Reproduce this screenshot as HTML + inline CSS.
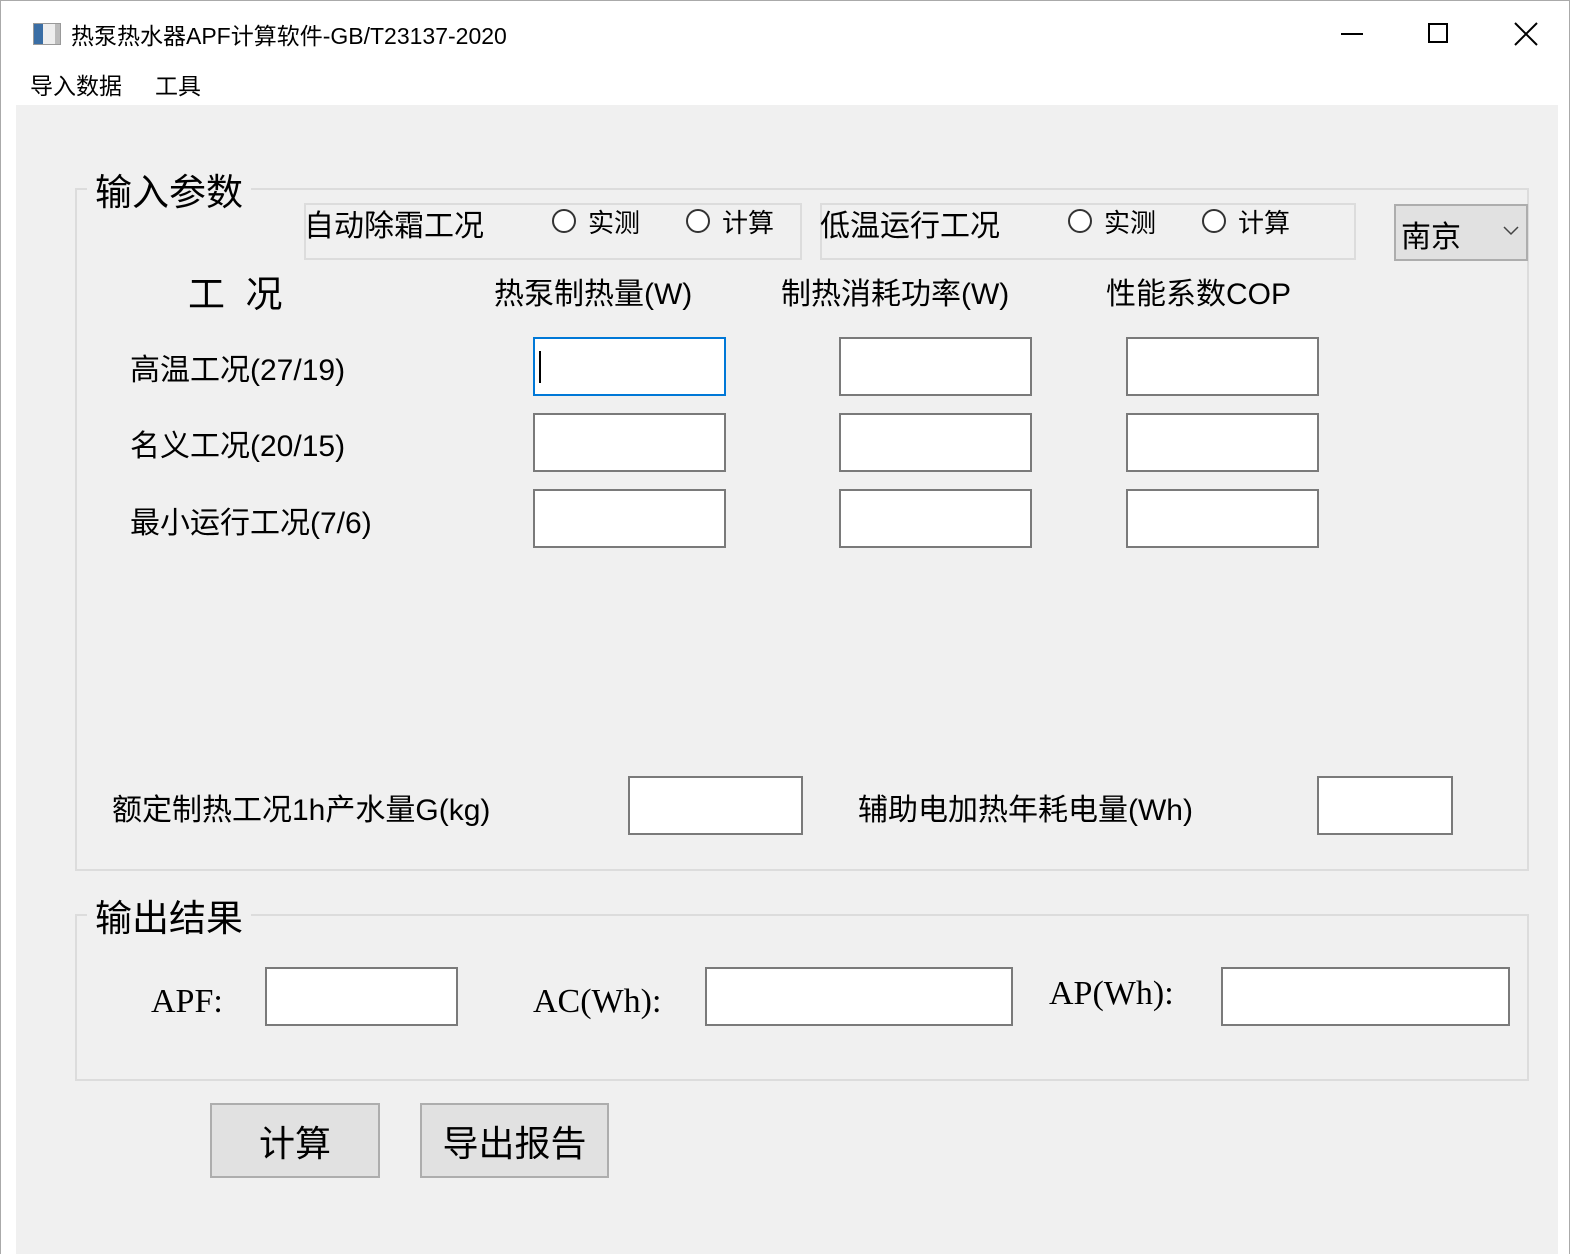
<!DOCTYPE html>
<html><head><meta charset="utf-8"><style>
*{margin:0;padding:0;box-sizing:border-box}
body{width:1570px;height:1254px;background:#fff;position:relative;overflow:hidden;font-family:"Liberation Sans","Noto Sans CJK SC",sans-serif;color:#000}
.a{position:absolute;white-space:nowrap}
.win{position:absolute;left:0;top:0;width:1570px;height:1254px;border:1px solid #aaa;border-bottom:none}
.client{position:absolute;left:16px;top:105px;width:1542px;height:1149px;background:#f0f0f0}
.gb{position:absolute;border:2px solid #dcdcdc}
.in{position:absolute;background:#fff;border:2px solid #7a7a7a}
.rb{position:absolute;width:24px;height:24px;border:2px solid #333;border-radius:50%;background:#fff}
.btn{position:absolute;background:#e1e1e1;border:2px solid #adadad;font-size:36px;display:flex;align-items:center;justify-content:center}
.l{font-size:30px}
.s{font-size:26px}
.serif{font-family:"Liberation Serif","Noto Serif CJK SC",serif;font-size:34px}
</style></head><body>
<div class="win"></div>
<div class="a" style="left:33px;top:23px;width:28px;height:22px;border:1px solid #999;background:linear-gradient(90deg,#3a6ea5 0 35%,#eee 35% 80%,#bbb 80%)"></div>
<div class="a" style="left:71px;top:17px;font-size:23px">热泵热水器APF计算软件-GB/T23137-2020</div>
<div class="a" style="left:1341px;top:33px;width:22px;height:2px;background:#000"></div>
<div class="a" style="left:1428px;top:23px;width:20px;height:20px;border:2px solid #000"></div>
<svg class="a" style="left:1514px;top:22px" width="24" height="24"><path d="M1 1L23 23M23 1L1 23" stroke="#000" stroke-width="2"/></svg>
<div class="a" style="left:30px;top:67px;font-size:23px">导入数据</div>
<div class="a" style="left:155px;top:67px;font-size:23px">工具</div>
<div class="client"></div>

<div class="gb" style="left:75px;top:188px;width:1454px;height:683px"></div>
<div class="a" style="left:87px;top:162px;font-size:37px;background:#f0f0f0;padding:0 8px">输入参数</div>
<div class="gb" style="left:304px;top:203px;width:498px;height:57px"></div>
<div class="a l" style="left:304px;top:201px">自动除霜工况</div>
<div class="rb" style="left:552px;top:209px"></div><div class="a s" style="left:588px;top:203px">实测</div>
<div class="rb" style="left:686px;top:209px"></div><div class="a s" style="left:722px;top:203px">计算</div>
<div class="gb" style="left:820px;top:203px;width:536px;height:57px"></div>
<div class="a l" style="left:820px;top:201px">低温运行工况</div>
<div class="rb" style="left:1068px;top:209px"></div><div class="a s" style="left:1104px;top:203px">实测</div>
<div class="rb" style="left:1202px;top:209px"></div><div class="a s" style="left:1238px;top:203px">计算</div>
<div class="a" style="left:1394px;top:204px;width:134px;height:57px;background:#e1e1e1;border:2px solid #adadad"></div>
<div class="a l" style="left:1401px;top:212px">南京</div>
<svg class="a" style="left:1503px;top:226px" width="16" height="10"><path d="M1 1L8 8L15 1" stroke="#444" stroke-width="1.5" fill="none"/></svg>

<div class="a" style="left:188px;top:264px;font-size:37px">工&nbsp;&nbsp;况</div>
<div class="a l" style="left:494px;top:269px">热泵制热量(W)</div>
<div class="a l" style="left:781px;top:269px">制热消耗功率(W)</div>
<div class="a l" style="left:1106px;top:269px">性能系数COP</div>

<div class="a l" style="left:130px;top:345px">高温工况(27/19)</div>
<div class="a l" style="left:130px;top:421px">名义工况(20/15)</div>
<div class="a l" style="left:130px;top:498px">最小运行工况(7/6)</div>

<div class="in" style="left:533px;top:337px;width:193px;height:59px;border-color:#0078d7"></div>
<div class="a" style="left:539px;top:351px;width:2px;height:32px;background:#000"></div>
<div class="in" style="left:839px;top:337px;width:193px;height:59px"></div>
<div class="in" style="left:1126px;top:337px;width:193px;height:59px"></div>
<div class="in" style="left:533px;top:413px;width:193px;height:59px"></div>
<div class="in" style="left:839px;top:413px;width:193px;height:59px"></div>
<div class="in" style="left:1126px;top:413px;width:193px;height:59px"></div>
<div class="in" style="left:533px;top:489px;width:193px;height:59px"></div>
<div class="in" style="left:839px;top:489px;width:193px;height:59px"></div>
<div class="in" style="left:1126px;top:489px;width:193px;height:59px"></div>

<div class="a l" style="left:112px;top:785px">额定制热工况1h产水量G(kg)</div>
<div class="in" style="left:628px;top:776px;width:175px;height:59px"></div>
<div class="a l" style="left:858px;top:785px">辅助电加热年耗电量(Wh)</div>
<div class="in" style="left:1317px;top:776px;width:136px;height:59px"></div>

<div class="gb" style="left:75px;top:914px;width:1454px;height:167px"></div>
<div class="a" style="left:87px;top:888px;font-size:37px;background:#f0f0f0;padding:0 8px">输出结果</div>
<div class="a serif" style="left:151px;top:983px">APF:</div>
<div class="in" style="left:265px;top:967px;width:193px;height:59px"></div>
<div class="a serif" style="left:533px;top:983px">AC(Wh):</div>
<div class="in" style="left:705px;top:967px;width:308px;height:59px"></div>
<div class="a serif" style="left:1049px;top:975px">AP(Wh):</div>
<div class="in" style="left:1221px;top:967px;width:289px;height:59px"></div>

<div class="btn" style="left:210px;top:1103px;width:170px;height:75px">计算</div>
<div class="btn" style="left:420px;top:1103px;width:189px;height:75px">导出报告</div>
</body></html>
